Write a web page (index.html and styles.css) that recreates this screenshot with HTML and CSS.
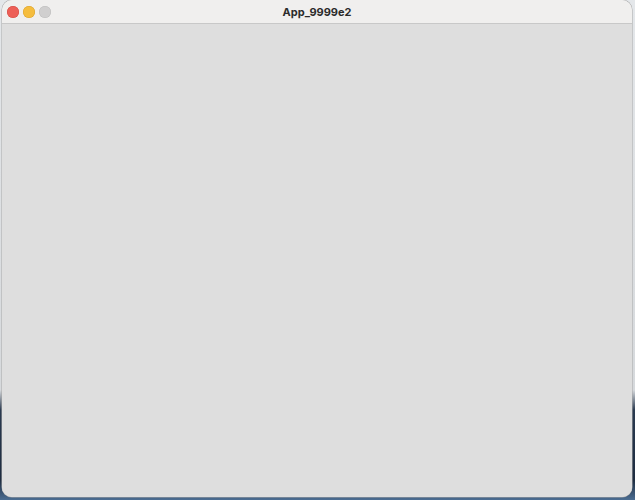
FILE: index.html
```html
<!DOCTYPE html>
<html>
<head>
<meta charset="utf-8">
<title>App_9999e2</title>
<link rel="stylesheet" href="styles.css">
</head>
<body>
<div class="desktop">
  <div class="window">
    <div class="titlebar">
      <div class="lights">
        <span class="light close"></span>
        <span class="light min"></span>
        <span class="light max"></span>
      </div>
      <div class="title">App_9999e2</div>
    </div>
    <div class="content"></div>
  </div>
</div>
</body>
</html>
```

FILE: styles.css
```css
html, body {
  margin: 0;
  padding: 0;
  width: 635px;
  height: 500px;
  overflow: hidden;
}
body {
  font-family: "Inter", "Liberation Sans", sans-serif;
}
.desktop {
  width: 635px;
  height: 500px;
  box-sizing: border-box;
  padding: 0 3px 3px 2px;
  background: linear-gradient(to bottom, #e4e7ea 0%, #d6d9dc 78%, #2a3a50 82%, #1e2c40 96%, #4b6d92 100%);
  display: flex;
}
.window {
  flex: 1;
  display: flex;
  flex-direction: column;
  border-radius: 10px;
  overflow: hidden;
  background: #dedede;
  box-shadow: 0 0 0 0.5px #a8a8a8;
}
.titlebar {
  height: 23px;
  flex: none;
  background: #f0efee;
  border-bottom: 1px solid #c8c8c8;
  display: flex;
  align-items: center;
  position: relative;
}
.lights {
  display: flex;
  gap: 4px;
  padding-left: 5px;
  align-items: center;
}
.light {
  width: 12px;
  height: 12px;
  border-radius: 50%;
  display: block;
}
.light.close { background: #ed5f57; box-shadow: inset 0 0 0 0.5px #d14a42; }
.light.min { background: #f5bd3e; box-shadow: inset 0 0 0 0.5px #d9a02c; }
.light.max { background: #d0cfcf; box-shadow: inset 0 0 0 0.5px #bcbcbc; }
.title {
  position: absolute;
  left: 0;
  right: 0;
  top: 0;
  bottom: 0;
  display: flex;
  align-items: center;
  justify-content: center;
  font-size: 11px;
  font-weight: 700;
  color: #2b2b2b;
  pointer-events: none;
}
.content {
  flex: 1;
  background: #dedede;
}
```
